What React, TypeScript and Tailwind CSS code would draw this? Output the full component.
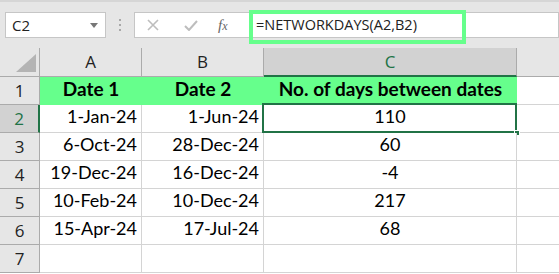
const rows: [string, string, string][] = [
  ["1-Jan-24", "1-Jun-24", "110"],
  ["6-Oct-24", "28-Dec-24", "60"],
  ["19-Dec-24", "16-Dec-24", "-4"],
  ["10-Feb-24", "10-Dec-24", "217"],
  ["15-Apr-24", "17-Jul-24", "68"],
  ["", "", ""],
];

const cellFont = "font-['Lato',sans-serif] text-[18px] text-black";
const titleFont = "font-['Lato',sans-serif] text-[19px] font-bold text-black";
const headFont = "font-['Open_Sans',sans-serif] text-[17px] text-[#222]";

function Toolbar() {
  return (
    <div className="relative flex h-[48px] items-center border-t-2 border-[#d6d6d6] bg-[#e6e6e6] pl-[5px]">
      {/* name box */}
      <div className="flex h-[26px] w-[101px] items-center justify-between border border-[#c6c6c6] bg-white pl-[6px] pr-[7px] font-['Open_Sans',sans-serif] text-[15px] text-[#222]">
        <span>C2</span>
        <svg width="8" height="5" viewBox="0 0 8 5">
          <path d="M0 0h8L4 5z" fill="#777" />
        </svg>
      </div>
      <div className="mx-[13px] flex flex-col gap-[3px]">
        <span className="h-[2px] w-[2px] bg-[#a8a8a8]" />
        <span className="h-[2px] w-[2px] bg-[#a8a8a8]" />
        <span className="h-[2px] w-[2px] bg-[#a8a8a8]" />
      </div>
      {/* cancel / enter / function */}
      <div className="flex h-[26px] w-[113px] items-center border border-r-0 border-[#c6c6c6] bg-white">
        <svg className="ml-[12px]" width="12" height="12" viewBox="0 0 12 12">
          <path d="M1 1l10 10M11 1L1 11" stroke="#bdbdbd" strokeWidth="1.6" />
        </svg>
        <svg className="ml-[25px]" width="14" height="11" viewBox="0 0 14 11">
          <path d="M1 6l4 4 8-9" stroke="#bdbdbd" strokeWidth="2" fill="none" />
        </svg>
        <span className="ml-[20px] font-['Liberation_Serif',serif] text-[15px] italic text-[#666]">
          f<span className="text-[12px]">x</span>
        </span>
      </div>
      {/* formula input */}
      <div className="flex h-[26px] flex-1 items-center border border-l-0 border-[#c6c6c6] bg-white pl-[9px] font-['Open_Sans',sans-serif] text-[14.5px] text-[#222]">
        =NETWORKDAYS(A2,B2)
      </div>
      <div className="pointer-events-none absolute left-[249px] top-[8px] h-[34px] w-[217px] border-[4px] border-[#66ff8c]" />
    </div>
  );
}

function Sheet() {
  return (
    <div className="grid grid-cols-[40px_102px_122px_253px_1fr] grid-rows-[29px] auto-rows-[28px]">
      {/* corner */}
      <div className="relative border-r border-b border-[#ababab] bg-[#e6e6e6]">
        <svg className="absolute bottom-[4px] right-[3px]" width="20" height="18" viewBox="0 0 20 18">
          <path d="M20 0v18H0z" fill="#b4b4b4" />
        </svg>
      </div>
      {["A", "B"].map((c) => (
        <div key={c} className={`flex items-center justify-center border-r border-b border-[#ababab] bg-[#e6e6e6] ${headFont}`}>
          {c}
        </div>
      ))}
      <div className={`flex items-center justify-center border-r border-[#ababab] border-b-2 border-b-[#217346] bg-[#d2d2d2] ${headFont} text-[#217346]`}>
        C
      </div>
      <div className="border-b border-[#ababab] bg-[#e6e6e6]" />

      {/* row 1: titles */}
      <div className={`flex items-center justify-center border-r border-b border-[#ababab] bg-[#e6e6e6] ${headFont}`}>1</div>
      <div className={`flex items-end justify-center bg-[#66ff8c] pb-[2px] ${titleFont}`}>Date 1</div>
      <div className={`flex items-end justify-center bg-[#66ff8c] pb-[2px] ${titleFont}`}>Date 2</div>
      <div className={`flex items-end justify-center bg-[#66ff8c] pb-[2px] ${titleFont}`}>No. of days between dates</div>
      <div className="border-b border-[#d4d4d4] bg-white" />

      {rows.map((r, i) => {
        const n = i + 2;
        const active = n === 2;
        return [
          <div
            key={`h${n}`}
            className={`flex items-center justify-center border-b border-[#ababab] ${headFont} ${
              active ? "border-r-2 border-r-[#217346] bg-[#d2d2d2] text-[#217346]" : "border-r bg-[#e6e6e6]"
            }`}
          >
            {n}
          </div>,
          <div key={`a${n}`} className={`flex items-end justify-end border-r border-b border-[#d4d4d4] bg-white pb-[2px] pr-[4px] ${cellFont}`}>
            {r[0]}
          </div>,
          <div key={`b${n}`} className={`flex items-end justify-end border-r border-b border-[#d4d4d4] bg-white pb-[2px] pr-[4px] ${cellFont}`}>
            {r[1]}
          </div>,
          <div key={`c${n}`} className={`relative flex items-end justify-center border-r border-b border-[#d4d4d4] bg-white pb-[2px] ${cellFont}`}>
            {r[2]}
            {active && (
              <>
                <div className="absolute -left-[2px] -top-[2px] -right-[1px] -bottom-[1px] border-2 border-[#217346]" />
                <div className="absolute -bottom-[4px] -right-[4px] h-[6px] w-[6px] border border-white bg-[#217346]" />
              </>
            )}
          </div>,
          <div key={`d${n}`} className="border-b border-[#d4d4d4] bg-white" />,
        ];
      })}
    </div>
  );
}

export default function App() {
  return (
    <div className="h-[274px] w-[559px] overflow-hidden bg-white">
      <Toolbar />
      <Sheet />
    </div>
  );
}
